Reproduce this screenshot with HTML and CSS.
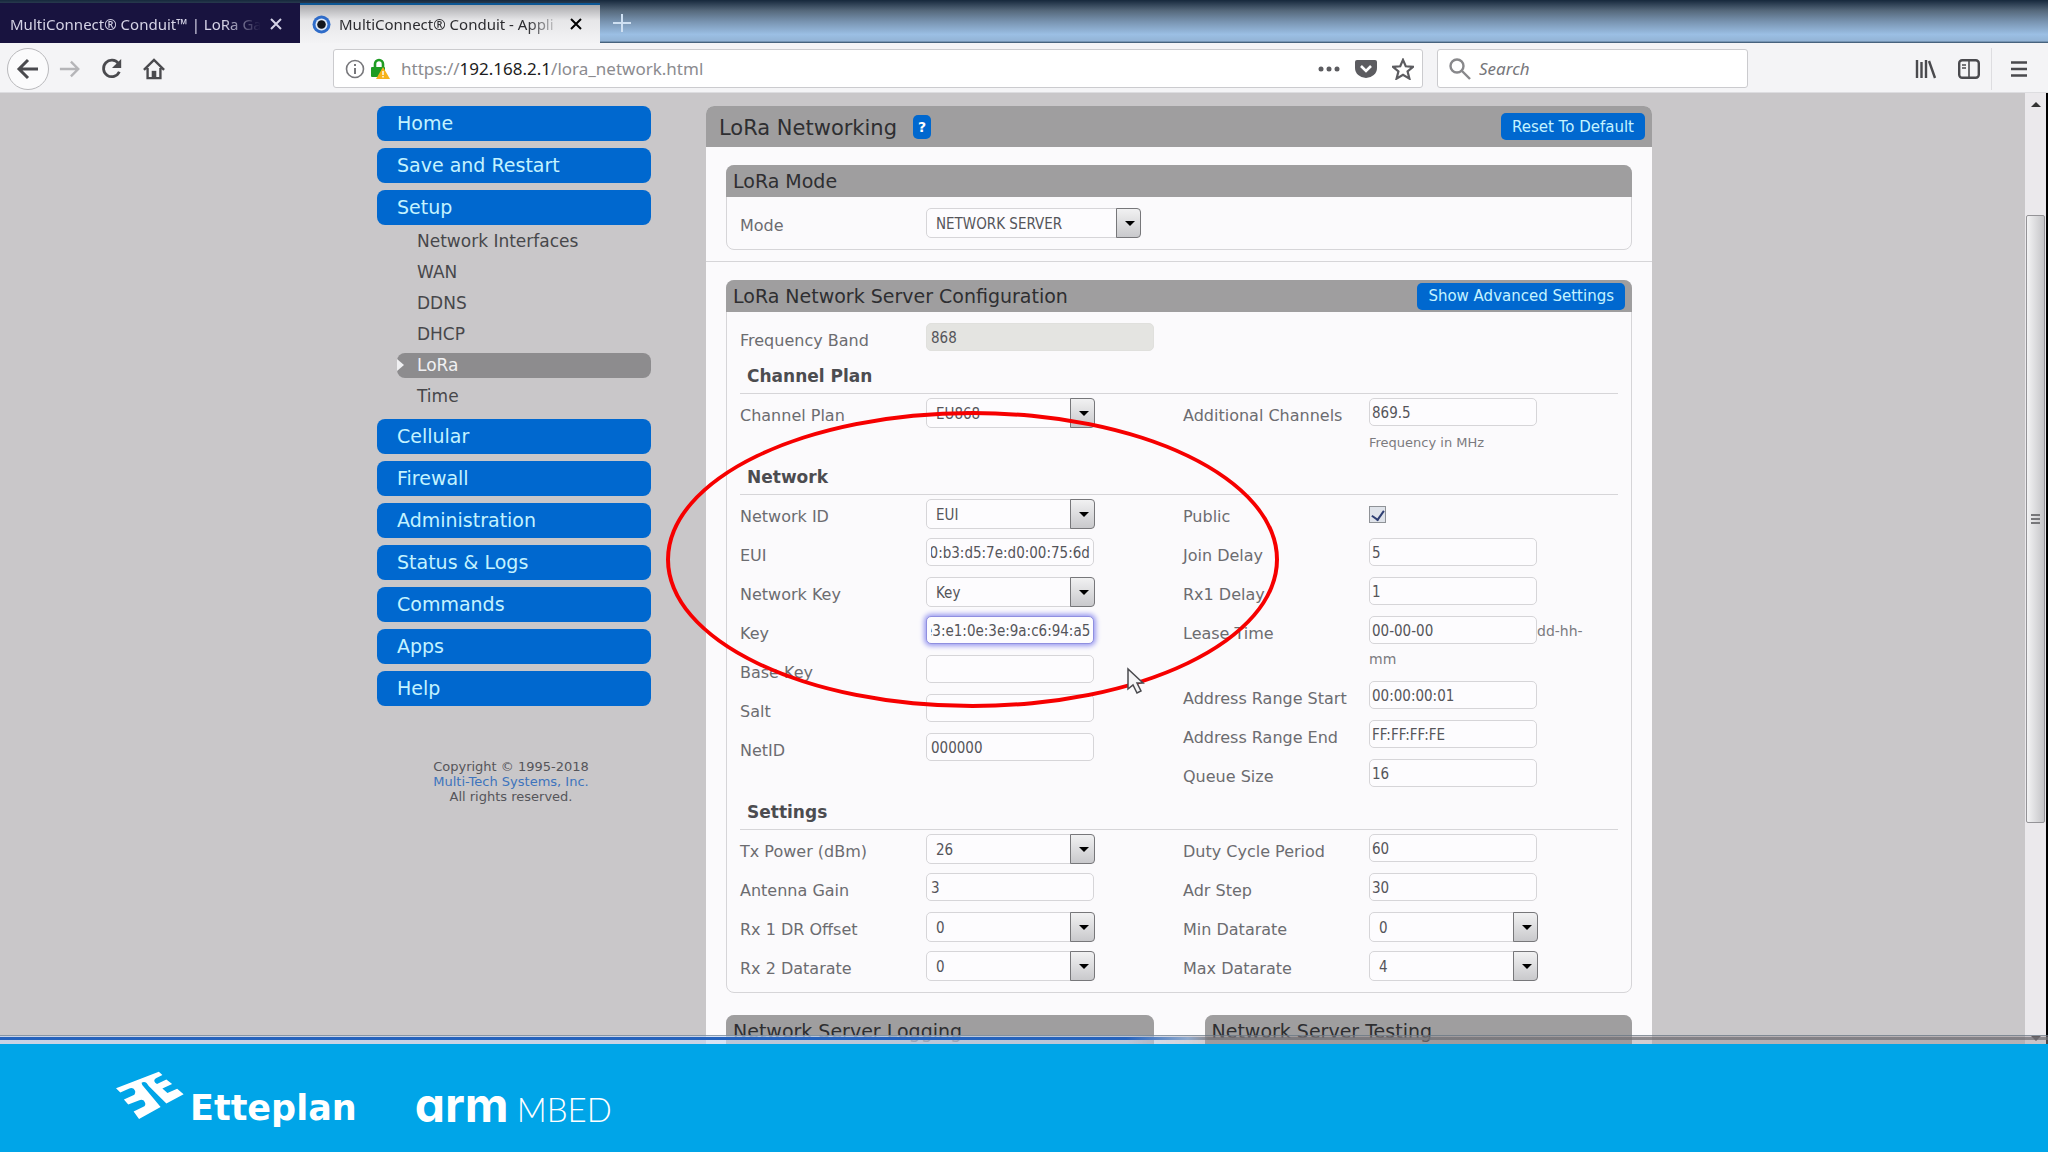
FILE: index.html
```
<!DOCTYPE html>
<html lang="en">
<head>
    <meta charset="UTF-8">
    <meta name="viewport" content="width=device-width, initial-scale=1.0">
    <title>MultiConnect® Conduit - LoRa Networking</title>
    <link rel="stylesheet" href="styles.css">
</head>
<body>
    <div class="browser">
        <div class="tab-strip">
            <div class="tab">
                <span class="tab-title">MultiConnect® Conduit™ | LoRa Ga</span>
                <button class="tab-close" aria-label="Close tab">
                    <svg width="14" height="14" viewBox="0 0 14 14" fill="none" stroke="currentColor" stroke-width="2"><path d="M2 2l10 10M12 2L2 12"/></svg>
                </button>
            </div>
            <div class="tab active">
                <svg class="tab-icon" width="19" height="19" viewBox="0 0 19 19"><circle cx="9.5" cy="9.5" r="9" fill="#2f6cc9"/><circle cx="9.5" cy="9.5" r="6" fill="#dfe8f5"/><circle cx="9.5" cy="9.5" r="4.3" fill="#14161c"/></svg>
                <span class="tab-title">MultiConnect® Conduit - Appli</span>
                <button class="tab-close" aria-label="Close tab">
                    <svg width="14" height="14" viewBox="0 0 14 14" fill="none" stroke="currentColor" stroke-width="2"><path d="M2 2l10 10M12 2L2 12"/></svg>
                </button>
            </div>
            <button class="new-tab" aria-label="New tab">
                <svg width="20" height="20" viewBox="0 0 20 20" fill="none" stroke="currentColor" stroke-width="2"><path d="M10 1v18M1 10h18"/></svg>
            </button>
        </div>

        <div class="toolbar">
            <button class="tool back" aria-label="Back">
                <svg width="24" height="24" viewBox="0 0 24 24" fill="none" stroke="currentColor" stroke-width="3"><path d="M22 12H3M12 3l-9 9 9 9"/></svg>
            </button>
            <button class="tool forward" aria-label="Forward">
                <svg width="22" height="22" viewBox="0 0 24 24" fill="none" stroke="currentColor" stroke-width="2.6"><path d="M1 12h20M13 4l8 8-8 8"/></svg>
            </button>
            <button class="tool" aria-label="Reload">
                <svg width="22" height="22" viewBox="0 0 24 24" fill="none" stroke="currentColor" stroke-width="3"><path d="M19 6A9 9 0 1 0 20 15"/><path d="M22 1v10h-10z" fill="currentColor" stroke="none"/></svg>
            </button>
            <button class="tool" aria-label="Home">
                <svg width="22" height="22" viewBox="0 0 24 24" fill="none" stroke="currentColor" stroke-width="2.6"><path d="M1 13L12 2l11 11M5 11v11h14V11"/><path d="M9.500 22v-8h5v8z" fill="currentColor" stroke="none"/></svg>
            </button>

            <div class="url-bar">
                <svg width="20" height="20" viewBox="0 0 20 20" fill="none" stroke="#77777b" stroke-width="1.6"><circle cx="10" cy="10" r="8.500"/><path d="M10 9v6M10 5v2" stroke-width="2"/></svg>
                <svg width="20" height="22" viewBox="0 0 20 22"><path d="M5 10V6a4 4 0 0 1 8 0v4" fill="none" stroke="#1f9c24" stroke-width="2.600"/><rect x="1" y="9" width="14" height="10" rx="1" fill="#1f9c24"/><path d="M13 9l7 12H6z" fill="#f6b21b"/><path d="M13 13v4M13 18v1.500" stroke="#fff" stroke-width="1.400"/></svg>
                <span class="url">https://<b>192.168.2.1</b>/lora_network.html</span>
                <svg class="url-more" width="22" height="6" viewBox="0 0 22 6" fill="#5c5c60"><circle cx="3" cy="3" r="2.500"/><circle cx="11" cy="3" r="2.500"/><circle cx="19" cy="3" r="2.500"/></svg>
                <svg width="22" height="20" viewBox="0 0 22 20"><path d="M2 1h18a2 2 0 0 1 2 2v6a11 10 0 0 1-22 0V3a2 2 0 0 1 2-2z" fill="#5c5c60"/><path d="M6 7l5 5 5-5" fill="none" stroke="#fff" stroke-width="2.600"/></svg>
                <svg width="22" height="22" viewBox="0 0 24 24" fill="none" stroke="#5c5c60" stroke-width="2.400"><path d="M12 2l3 7 8 .7-6 5 2 7.800-7-4.200-7 4.200 2-7.800-6-5L9 9z"/></svg>
            </div>
            <div class="search-bar">
                <svg width="24" height="24" viewBox="0 0 24 24" fill="none" stroke="#88888b" stroke-width="2.400"><circle cx="9" cy="9" r="6.500"/><path d="M14 14l8 8"/></svg>
                <input type="text" placeholder="Search" aria-label="Search">
            </div>
            <div class="toolbar-end">
                <button class="tool" aria-label="Library">
                    <svg width="22" height="20" viewBox="0 0 22 20" fill="none" stroke="currentColor" stroke-width="2.400"><path d="M2 1v18M6.500 3v16M11 1v18M14 2l6 17"/></svg>
                </button>
                <button class="tool" aria-label="Sidebar">
                    <svg width="22" height="20" viewBox="0 0 22 20" fill="none" stroke="currentColor" stroke-width="2.400"><rect x="1.200" y="1.200" width="19.600" height="17.600" rx="3"/><path d="M11 1v18" stroke-width="1.600"/><path d="M4 6h4M4 9h4" stroke-width="1.400"/></svg>
                </button>
                <button class="tool menu" aria-label="Menu">
                    <svg width="18" height="18" viewBox="0 0 18 18" fill="none" stroke="currentColor" stroke-width="2.400"><path d="M1 2.500h16M1 9h16M1 15.500h16"/></svg>
                </button>
            </div>
        </div>

        <div class="viewport">
            <div class="page">
                <div class="layout">
                    <nav class="sidebar">
                        <a href="#" class="nav-item">Home</a>
                        <a href="#" class="nav-item">Save and Restart</a>
                        <a href="#" class="nav-item">Setup</a>
                        <div class="subnav">
                            <a href="#">Network Interfaces</a>
                            <a href="#">WAN</a>
                            <a href="#">DDNS</a>
                            <a href="#">DHCP</a>
                            <a href="#" class="current">LoRa</a>
                            <a href="#">Time</a>
                        </div>
                        <a href="#" class="nav-item">Cellular</a>
                        <a href="#" class="nav-item">Firewall</a>
                        <a href="#" class="nav-item">Administration</a>
                        <a href="#" class="nav-item">Status &amp; Logs</a>
                        <a href="#" class="nav-item">Commands</a>
                        <a href="#" class="nav-item">Apps</a>
                        <a href="#" class="nav-item">Help</a>
                        <p class="copyright">
                            Copyright © 1995-2018<br>
                            <a href="#">Multi-Tech Systems, Inc.</a><br>
                            All rights reserved.
                        </p>
                    </nav>

                    <form class="content">
                        <div class="content-header">
                            <h1>LoRa Networking</h1>
                            <button type="button" class="help" aria-label="Help">?</button>
                            <button type="button" class="btn">Reset To Default</button>
                        </div>

                        <div class="block">
                            <div class="panel">
                                <div class="panel-header"><h2>LoRa Mode</h2></div>
                                <div class="panel-body">
                                    <div class="row">
                                        <label for="mode">Mode</label>
                                        <div class="select mode"><select id="mode"><option>NETWORK SERVER</option></select></div>
                                    </div>
                                </div>
                            </div>
                        </div>

                        <div class="block">
                            <div class="panel">
                                <div class="panel-header">
                                    <h2>LoRa Network Server Configuration</h2>
                                    <button type="button" class="btn">Show Advanced Settings</button>
                                </div>
                                <div class="panel-body">
                                    <div class="row">
                                        <label for="band">Frequency Band</label>
                                        <input type="text" id="band" class="band" value="868" disabled>
                                    </div>

                                    <h3>Channel Plan</h3>
                                    <div class="columns">
                                        <div class="column">
                                            <div class="row">
                                                <label for="plan">Channel Plan</label>
                                                <div class="select"><select id="plan"><option>EU868</option></select></div>
                                            </div>
                                        </div>
                                        <div class="column right">
                                            <div class="row tall">
                                                <label for="channels">Additional Channels</label>
                                                <div class="field">
                                                    <input type="text" id="channels" value="869.5">
                                                    <span class="hint below">Frequency in MHz</span>
                                                </div>
                                            </div>
                                        </div>
                                    </div>

                                    <h3>Network</h3>
                                    <div class="columns">
                                        <div class="column">
                                            <div class="row">
                                                <label for="network-id">Network ID</label>
                                                <div class="select"><select id="network-id"><option>EUI</option></select></div>
                                            </div>
                                            <div class="row">
                                                <label for="eui">EUI</label>
                                                <input type="text" id="eui" class="scroll-end" value="00:b3:d5:7e:d0:00:75:6d">
                                            </div>
                                            <div class="row">
                                                <label for="network-key">Network Key</label>
                                                <div class="select"><select id="network-key"><option>Key</option></select></div>
                                            </div>
                                            <div class="row">
                                                <label for="key">Key</label>
                                                <input type="text" id="key" class="scroll-end highlighted" value="e3:e1:0e:3e:9a:c6:94:a5">
                                            </div>
                                            <div class="row">
                                                <label for="base-key">Base Key</label>
                                                <input type="text" id="base-key">
                                            </div>
                                            <div class="row">
                                                <label for="salt">Salt</label>
                                                <input type="text" id="salt">
                                            </div>
                                            <div class="row">
                                                <label for="net-id">NetID</label>
                                                <input type="text" id="net-id" value="000000">
                                            </div>
                                        </div>
                                        <div class="column right">
                                            <div class="row">
                                                <label for="public">Public</label>
                                                <input type="checkbox" id="public" checked>
                                            </div>
                                            <div class="row">
                                                <label for="join-delay">Join Delay</label>
                                                <input type="text" id="join-delay" value="5">
                                            </div>
                                            <div class="row">
                                                <label for="rx1-delay">Rx1 Delay</label>
                                                <input type="text" id="rx1-delay" value="1">
                                            </div>
                                            <div class="row tall">
                                                <label for="lease">Lease Time</label>
                                                <div class="field"><input type="text" id="lease" value="00-00-00"><span class="hint">dd-hh-mm</span></div>
                                            </div>
                                            <div class="row">
                                                <label for="range-start">Address Range Start</label>
                                                <input type="text" id="range-start" value="00:00:00:01">
                                            </div>
                                            <div class="row">
                                                <label for="range-end">Address Range End</label>
                                                <input type="text" id="range-end" value="FF:FF:FF:FE">
                                            </div>
                                            <div class="row">
                                                <label for="queue">Queue Size</label>
                                                <input type="text" id="queue" value="16">
                                            </div>
                                        </div>
                                    </div>

                                    <h3>Settings</h3>
                                    <div class="columns">
                                        <div class="column">
                                            <div class="row">
                                                <label for="tx-power">Tx Power (dBm)</label>
                                                <div class="select"><select id="tx-power"><option>26</option></select></div>
                                            </div>
                                            <div class="row">
                                                <label for="gain">Antenna Gain</label>
                                                <input type="text" id="gain" value="3">
                                            </div>
                                            <div class="row">
                                                <label for="rx1-offset">Rx 1 DR Offset</label>
                                                <div class="select"><select id="rx1-offset"><option>0</option></select></div>
                                            </div>
                                            <div class="row">
                                                <label for="rx2-rate">Rx 2 Datarate</label>
                                                <div class="select"><select id="rx2-rate"><option>0</option></select></div>
                                            </div>
                                        </div>
                                        <div class="column right">
                                            <div class="row">
                                                <label for="duty">Duty Cycle Period</label>
                                                <input type="text" id="duty" value="60">
                                            </div>
                                            <div class="row">
                                                <label for="adr">Adr Step</label>
                                                <input type="text" id="adr" value="30">
                                            </div>
                                            <div class="row">
                                                <label for="min-rate">Min Datarate</label>
                                                <div class="select"><select id="min-rate"><option>0</option></select></div>
                                            </div>
                                            <div class="row">
                                                <label for="max-rate">Max Datarate</label>
                                                <div class="select"><select id="max-rate"><option>4</option></select></div>
                                            </div>
                                        </div>
                                    </div>
                                </div>
                            </div>

                            <div class="panel-pair">
                                <div class="panel">
                                    <div class="panel-header"><h2>Network Server Logging</h2></div>
                                    <div class="panel-body"></div>
                                </div>
                                <div class="panel">
                                    <div class="panel-header"><h2>Network Server Testing</h2></div>
                                    <div class="panel-body"></div>
                                </div>
                            </div>
                        </div>
                    </form>

                    <div class="marker"></div>
                    <svg class="pointer" width="18" height="28" viewBox="0 0 18 28" fill="#f4f4f6" stroke="#4a4a4e" stroke-width="1.500"><path d="M1 2v20l5-4 4 8 4-2-4-8h6z"/></svg>
                </div>
            </div>
            <div class="scrollbar">
                <span class="arrow up"></span>
                <div class="track"><div class="thumb"><i></i><i></i><i></i></div></div>
                <span class="arrow down"></span>
            </div>
            <div class="window-edge"></div>
        </div>
    </div>

    <footer class="brand-bar">
        <div class="etteplan">
            <svg width="68" height="48" viewBox="73 122 189 140" preserveAspectRatio="none" fill="#fff"><path d="M73 172L192 124l10 10-18 9q-8 5-2 13l5 4 26-13 16 13-27 13 14 13 27-12 18 16-48 27-49-51-6-9q-6-5-14-1l2 7 51 64-60 35-15-22 30-15q6-7-2-17-6-4-12-1l-31 13-12-15 29-14q6-9-2-17-6-4-12-1l-25 12z"/></svg>
            <span>Etteplan</span>
        </div>
        <div class="mbed"><b>arm</b><span>MBED</span></div>
    </footer>

    <script>
        // Long keys show their last characters
        document.querySelectorAll('.scroll-end').forEach(function (input) {
            input.scrollLeft = input.scrollWidth;
        });
    </script>
</body>
</html>
```
FILE: styles.css
```
:root {
    --blue: #0068cf;
    --button-text: #c4f3ff;
    --page-bg: #c9c7c9;
    --header-bg: #9f9e9f;
    --panel-bg: #fbfafc;
    --line: #d6d5d8;
    --footer-bg: #00a5e8;
}

* {
    box-sizing: border-box;
}

body {
    margin: 0;
    height: 100vh;
    display: flex;
    flex-direction: column;
    overflow: hidden;
    background: var(--page-bg);
    font-family: 'DejaVu Sans', Verdana, sans-serif;
    color: #55555a;
}

button,
input,
select {
    font: inherit;
    color: inherit;
}

button {
    padding: 0;
    border: 0;
    background: none;
    cursor: pointer;
}

a {
    text-decoration: none;
}

.browser {
    flex: 1;
    min-height: 0;
    display: flex;
    flex-direction: column;
    font-family: 'Noto Sans', 'Open Sans', sans-serif;
}

/* Tabs */
.tab-strip {
    flex: none;
    display: flex;
    height: 43px;
    padding-top: 3px;
    background: linear-gradient(#16283c, #56697c 25%, #7893b0 50%, #9bbfe4 80%, #93b4d6 95%, #2f4a63);
}

.tab {
    display: flex;
    align-items: center;
    gap: 8px;
    width: 300px;
    padding: 2px 17px 0 10px;
    background: #18133f;
    color: #d5d3e6;
    font-size: 15px;
}

.tab.active {
    padding: 0 17px 0 12px;
    border-top: 2px solid #0d5794;
    background: linear-gradient(#a9a9ac, #e6e6e8 40%, #f3f3f5);
    color: #2c2c30;
}

.tab-title {
    flex: 1;
    overflow: hidden;
    white-space: nowrap;
    mask-image: linear-gradient(to right, #000 85%, transparent);
}

.tab-icon {
    flex: none;
}

.tab-close,
.new-tab {
    display: flex;
    align-items: center;
}

.tab.active .tab-close {
    color: #000;
}

.new-tab {
    padding-left: 12px;
    color: #cfe0f2;
}

/* Toolbar */
.toolbar {
    flex: none;
    display: flex;
    align-items: center;
    height: 50px;
    padding: 2px 7px 0 7px;
    background: #f4f4f6;
    border-bottom: 1px solid #dddde0;
    color: #4a4a4e;
}

.tool {
    display: flex;
    align-items: center;
    justify-content: center;
    width: 42px;
    height: 42px;
}

.tool.back {
    border: 1px solid #b9b9bc;
    border-radius: 50%;
    background: #fbfbfc;
}

.tool.forward {
    color: #b5b5b8;
}

.url-bar,
.search-bar {
    display: flex;
    align-items: center;
    height: 39px;
    border: 1px solid #cbcbce;
    border-radius: 3px;
    background: #fff;
    font-size: 17px;
}

.url-bar {
    flex: 1;
    gap: 5px;
    margin-left: 158px;
    padding: 0 8px 0 11px;
}

.url {
    padding-left: 6px;
    color: #8b8b8f;
}

.url b {
    font-weight: 400;
    color: #1c1c20;
}

.url-more {
    margin-left: auto;
}

.url-bar svg:nth-last-child(-n+2) {
    margin-left: 10px;
}

.search-bar {
    gap: 7px;
    width: 311px;
    margin-left: 14px;
    padding: 0 10px;
}

.search-bar input {
    flex: 1;
    min-width: 0;
    padding: 0;
    border: 0;
    outline: 0;
    background: none;
}

.search-bar input::placeholder {
    color: #77777b;
    font-style: italic;
}

.toolbar-end {
    display: flex;
    gap: 1px;
    margin-left: 157px;
}

.tool.menu {
    width: 50px;
    padding-left: 4px;
    border-left: 1px solid #dddde0;
}

/* Page area */
.viewport {
    position: relative;
    flex: 1;
    min-height: 0;
    display: flex;
    overflow: hidden;
    font-family: 'DejaVu Sans', Verdana, sans-serif;
}

/* Edge of the window under the page */
.window-edge {
    position: absolute;
    left: 0;
    right: 0;
    bottom: 0;
    height: 9px;
    border-top: 1px solid rgba(90, 110, 125, 0.6);
    background:
        linear-gradient(to right, #2563bd, #2563bd 55%, #8fa9cc 58%, rgba(110, 110, 115, 0.7) 59%) 0 1px / 100% 3px no-repeat,
        linear-gradient(to right, rgba(200, 215, 240, 0.7), rgba(200, 215, 240, 0.7) 55%, rgba(160, 150, 155, 0.45) 59%);
}

.page {
    flex: 1;
    overflow: hidden;
    padding: 13px 0 0 4px;
}

.layout {
    position: relative;
    display: flex;
    align-items: flex-start;
    width: 1275px;
    margin: 0 auto;
}

/* Sidebar */
.sidebar {
    display: flex;
    flex-direction: column;
    gap: 7px;
    width: 274px;
    margin-right: 55px;
}

.nav-item {
    height: 35px;
    padding-left: 20px;
    border-radius: 8px;
    background: var(--blue);
    color: var(--button-text);
    font-size: 19px;
    line-height: 35px;
}

.subnav {
    display: flex;
    flex-direction: column;
    gap: 6px;
    margin: -3px 0 3px 20px;
}

.subnav a {
    position: relative;
    height: 25px;
    padding-left: 20px;
    border-radius: 8px;
    color: #47474b;
    font-size: 17px;
    line-height: 25px;
}

.subnav .current {
    background: #8d8c8e;
    color: #f0f0f2;
}

.subnav .current::before {
    content: '';
    position: absolute;
    left: 0;
    top: 6px;
    border: 6px solid transparent;
    border-left: 7px solid #f0f0f2;
    border-right: 0;
}

.copyright {
    margin: 46px 0 0;
    padding-right: 6px;
    font-size: 13px;
    line-height: 15px;
    text-align: center;
}

.copyright a {
    color: #3d74bd;
}

/* Content */
.content {
    flex: 1;
    border-radius: 8px 8px 0 0;
    background: var(--panel-bg);
}

.content-header,
.panel-header {
    display: flex;
    align-items: center;
    background: var(--header-bg);
    color: #2e2e31;
}

.content-header {
    height: 41px;
    padding: 0 7px 0 13px;
    border-radius: 8px 8px 0 0;
}

h1,
h2,
h3 {
    margin: 0;
}

h1 {
    padding-top: 3px;
    font-size: 21px;
    font-weight: 400;
}

h2 {
    font-size: 19px;
    font-weight: 400;
}

.help {
    width: 18px;
    height: 24px;
    margin-left: 16px;
    border-radius: 5px;
    background: var(--blue);
    color: #fff;
    font-size: 14px;
    font-weight: 700;
}

.btn {
    height: 27px;
    margin-left: auto;
    padding: 0 11px;
    border-radius: 5px;
    background: var(--blue);
    color: var(--button-text);
    font-size: 15px;
}

.block {
    padding: 18px 20px 11px;
}

.block + .block {
    border-top: 1px solid var(--line);
}

.panel {
    border: 1px solid var(--line);
    border-radius: 8px;
}

.panel-header {
    height: 32px;
    margin: -1px -1px 0;
    padding: 0 7px;
    border-radius: 8px 8px 0 0;
}

.panel-body {
    padding: 11px 13px 5px 13px;
}

.panel-pair {
    display: grid;
    grid-template-columns: 1fr 1fr;
    gap: 51px;
    margin-top: 22px;
}

.panel-pair .panel-body {
    height: 80px;
}

h3 {
    padding-left: 7px;
    border-bottom: 1px solid var(--line);
    color: #4c4c50;
    font-size: 17px;
    font-weight: 700;
    line-height: 34px;
}

/* Form rows */
.columns {
    display: grid;
    grid-template-columns: 443px 1fr;
    padding-top: 4px;
}

.column {
    display: flex;
    flex-direction: column;
    gap: 3px;
}

.row {
    display: flex;
    align-items: flex-start;
    height: 36px;
}

.row.tall {
    height: 62px;
}

.row label {
    width: 186px;
    color: #6c6c70;
    font-size: 16px;
    line-height: 35px;
}

.content input[type='text'],
.select {
    width: 168px;
    height: 28px;
    border: 1px solid var(--line);
    border-radius: 5px;
    background: #fdfcfe;
    font-family: 'DejaVu Sans Condensed', 'Noto Sans', sans-serif;
    font-size: 15px;
}

.content input[type='text'] {
    padding: 1px 3px 0 4px;
}

.right input[type='text'] {
    padding: 1px 2px 0;
}

.content input.band {
    width: 228px;
    border-color: #e0e0dd;
    background: #e4e4e1;
}

.content input.highlighted {
    border-color: #8f8fe0;
    box-shadow: 0 0 5px 2px #9a9af0;
}

.select {
    position: relative;
    width: 169px;
    height: 30px;
}

.select.mode {
    width: 215px;
}

.select select {
    width: 100%;
    height: 100%;
    padding: 2px 24px 0 9px;
    border: 0;
    background: none;
    appearance: none;
}

.select::after {
    content: '';
    position: absolute;
    top: -1px;
    right: -1px;
    bottom: -1px;
    width: 23px;
    border: 1px solid #77777a;
    border-radius: 0 4px 4px 0;
    background: linear-gradient(#f1f1f2, #c9c9cc);
    pointer-events: none;
}

.select::before {
    content: '';
    position: absolute;
    z-index: 1;
    top: 12px;
    right: 5px;
    border: 5px solid transparent;
    border-top-color: #000;
    border-bottom: 0;
    pointer-events: none;
}

.row input[type='checkbox'] {
    appearance: none;
    width: 17px;
    height: 17px;
    margin: 7px 0 0;
    border: 1px solid #8f9297;
    background: #dfe3ea;
    display: grid;
    place-items: center;
}

.row input[type='checkbox']:checked::before {
    content: '';
    width: 6px;
    height: 10px;
    margin-bottom: 2px;
    border: solid #2f3f73;
    border-width: 0 2px 2px 0;
    rotate: 35deg;
}

.field {
    width: 220px;
    line-height: 28px;
}

.hint {
    color: #7b7b7f;
    font-size: 14px;
}

.hint.below {
    display: block;
    font-size: 13px;
    line-height: 32px;
}

/* Drawn over the form */
.marker {
    position: absolute;
    left: 289px;
    top: 305px;
    width: 613px;
    height: 297px;
    border: 4px solid #f60000;
    border-radius: 50%;
    pointer-events: none;
}

.pointer {
    position: absolute;
    left: 750px;
    top: 561px;
}

/* Scrollbar */
.scrollbar {
    display: flex;
    flex-direction: column;
    align-items: center;
    width: 23px;
    padding: 9px 0 3px;
    border-right: 2px solid #000;
    background: #ebe9ec;
}

.arrow {
    border: 5px solid transparent;
}

.arrow.up {
    border-top: 0;
    border-bottom-color: #333;
}

.arrow.down {
    border-bottom: 0;
    border-top-color: #333;
}

.track {
    flex: 1;
    width: 100%;
    padding: 108px 1px 0;
}

.thumb {
    display: flex;
    flex-direction: column;
    align-items: center;
    justify-content: center;
    gap: 2px;
    height: 74%;
    border: 1px solid #949397;
    border-radius: 2px;
    background: linear-gradient(to right, #f3f3f4, #dcdcde 50%, #c4c4c7);
}

.thumb i {
    width: 9px;
    height: 2px;
    background: #77777a;
}

/* Brand bar */
.brand-bar {
    flex: none;
    display: flex;
    align-items: flex-start;
    height: 108px;
    padding: 27px 116px 0;
    background: var(--footer-bg);
    color: #fff;
}

.etteplan {
    display: flex;
    align-items: flex-start;
    gap: 6px;
    font-size: 35px;
    font-weight: 700;
    line-height: 40px;
}

.etteplan span {
    padding-top: 17px;
}

.mbed {
    display: flex;
    align-items: baseline;
    gap: 8px;
    margin-left: 58px;
    line-height: 68px;
}

.mbed b {
    font-family: Inter, sans-serif;
    font-size: 48px;
    font-weight: 700;
    font-feature-settings: 'cv11';
}

.mbed span {
    font-family: Lato, sans-serif;
    font-size: 33px;
    font-weight: 300;
}
```
